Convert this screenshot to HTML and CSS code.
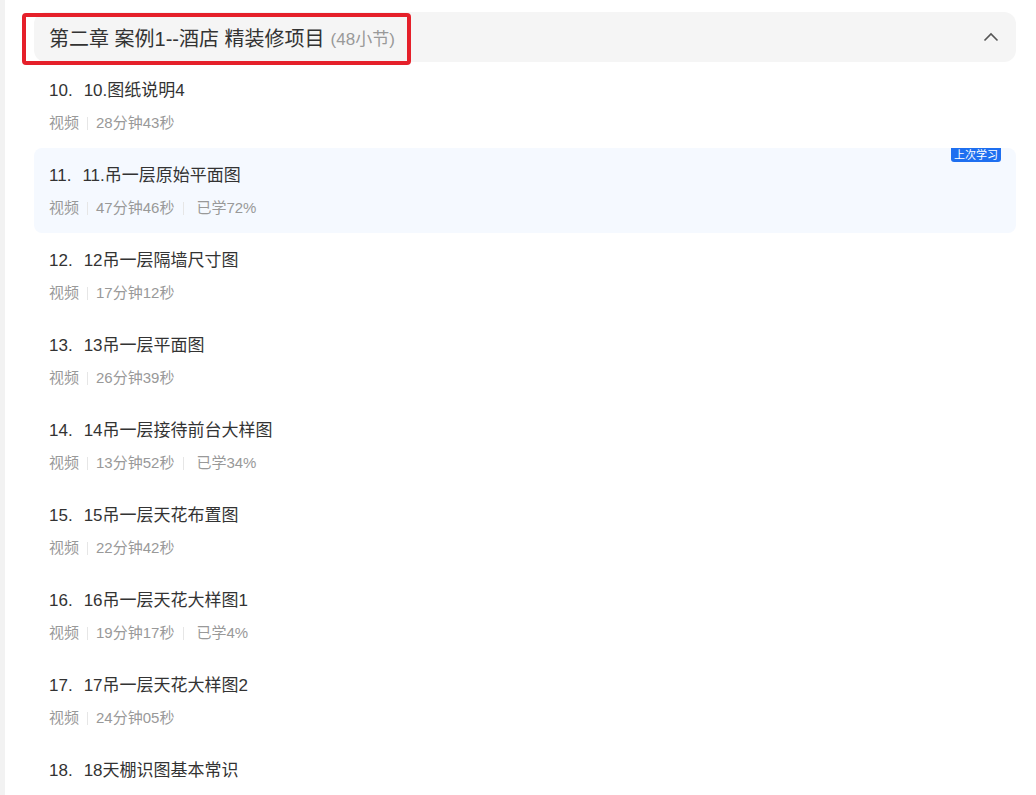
FILE: index.html
```html
<!DOCTYPE html>
<html lang="zh-CN">
<head>
    <meta charset="UTF-8">
    <meta name="viewport" content="width=device-width, initial-scale=1.0">
    <title>课程目录</title>
    <link rel="stylesheet" href="styles.css">
</head>
<body>
    <div class="page">
        <div class="chapter">
            <div class="chapter-head">
                <span class="chapter-title">第二章 案例1--酒店 精装修项目</span>
                <span class="chapter-count">(48小节)</span>
                <svg class="chevron" width="16" height="10" viewBox="0 0 16 10">
                    <path d="M1.5 8.5 L8 2 L14.5 8.5" fill="none" stroke="#555" stroke-width="1.6"/>
                </svg>
            </div>
            <!-- highlight frame around the chapter heading -->
            <div class="mark"></div>

            <ul class="lessons">
                <li class="lesson">
                    <div class="lesson-title"><span class="num">10.</span>10.图纸说明4</div>
                    <div class="meta"><span>视频</span><i class="sep"></i><span>28分钟43秒</span></div>
                </li>
                <li class="lesson current">
                    <span class="badge">上次学习</span>
                    <div class="lesson-title"><span class="num">11.</span>11.吊一层原始平面图</div>
                    <div class="meta"><span>视频</span><i class="sep"></i><span>47分钟46秒</span><i class="sep wide"></i><span>已学72%</span></div>
                </li>
                <li class="lesson">
                    <div class="lesson-title"><span class="num">12.</span>12吊一层隔墙尺寸图</div>
                    <div class="meta"><span>视频</span><i class="sep"></i><span>17分钟12秒</span></div>
                </li>
                <li class="lesson">
                    <div class="lesson-title"><span class="num">13.</span>13吊一层平面图</div>
                    <div class="meta"><span>视频</span><i class="sep"></i><span>26分钟39秒</span></div>
                </li>
                <li class="lesson">
                    <div class="lesson-title"><span class="num">14.</span>14吊一层接待前台大样图</div>
                    <div class="meta"><span>视频</span><i class="sep"></i><span>13分钟52秒</span><i class="sep wide"></i><span>已学34%</span></div>
                </li>
                <li class="lesson">
                    <div class="lesson-title"><span class="num">15.</span>15吊一层天花布置图</div>
                    <div class="meta"><span>视频</span><i class="sep"></i><span>22分钟42秒</span></div>
                </li>
                <li class="lesson">
                    <div class="lesson-title"><span class="num">16.</span>16吊一层天花大样图1</div>
                    <div class="meta"><span>视频</span><i class="sep"></i><span>19分钟17秒</span><i class="sep wide"></i><span>已学4%</span></div>
                </li>
                <li class="lesson">
                    <div class="lesson-title"><span class="num">17.</span>17吊一层天花大样图2</div>
                    <div class="meta"><span>视频</span><i class="sep"></i><span>24分钟05秒</span></div>
                </li>
                <li class="lesson">
                    <div class="lesson-title"><span class="num">18.</span>18天棚识图基本常识</div>
                </li>
            </ul>
        </div>
    </div>
</body>
</html>
```

FILE: styles.css
```css
html, body {
    margin: 0;
    padding: 0;
    background: #fff;
    overflow: hidden;
}
body {
    font-family: "Liberation Sans", "Noto Sans CJK SC", sans-serif;
    color: #333;
}
.page {
    border-left: 5px solid #f2f2f2;
    min-height: 795px;
    padding: 12px 20px 0 29px;
}
.chapter {
    position: relative;
}
.chapter-head {
    height: 50px;
    display: flex;
    align-items: center;
    padding: 0 17px 0 15px;
    background: #f5f5f5;
    border-radius: 12px;
}
.chapter-title {
    font-size: 20px;
    color: #333;
    white-space: pre;
}
.chapter-count {
    font-size: 17px;
    color: #999;
    margin-left: 6px;
}
.chevron {
    margin-left: auto;
}
.mark {
    position: absolute;
    left: -12px;
    top: 1px;
    width: 381px;
    height: 44px;
    border: 4px solid #e5202a;
    border-radius: 4px;
}
.lessons {
    list-style: none;
    margin: 1px 0 0;
    padding: 0;
}
.lesson {
    position: relative;
    height: 85px;
    box-sizing: border-box;
    padding: 18px 15px 0;
    border-radius: 8px;
}
.lesson.current {
    background: #f5f9ff;
}
.lesson-title {
    font-size: 17px;
    line-height: 20px;
    color: #333;
}
.num {
    margin-right: 11px;
}
.meta {
    display: flex;
    align-items: center;
    margin-top: 13px;
    font-size: 15px;
    line-height: 18px;
    color: #999;
}
.sep {
    width: 1px;
    height: 13px;
    background: #e6e6e6;
    margin: 0 8px;
}
.sep.wide {
    margin: 0 12px 0 9px;
}
.badge {
    position: absolute;
    top: 0;
    right: 15px;
    height: 14px;
    padding: 0 3px;
    background: #1e6ff0;
    color: #fff;
    font-size: 11px;
    line-height: 14px;
    border-radius: 0 0 3px 3px;
}
```
